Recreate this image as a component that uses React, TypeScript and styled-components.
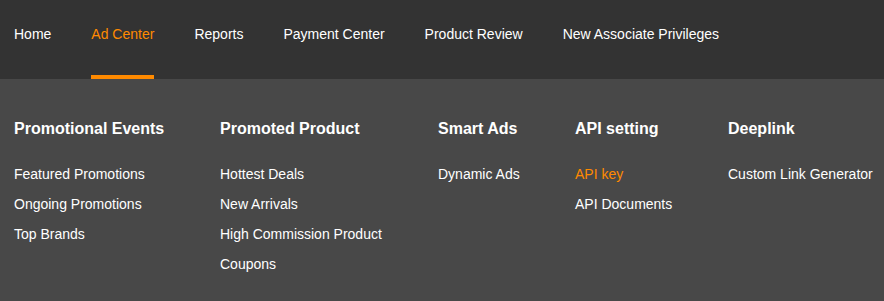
import React from "react";
import styled, { createGlobalStyle } from "styled-components";

const GlobalStyle = createGlobalStyle`
  body {
    margin: 0;
    background: #484848;
    font-family: Arial, "Liberation Sans", sans-serif;
  }
`;

const Page = styled.div`
  width: 884px;
  height: 301px;
  background: #484848;
`;

const TopBar = styled.nav`
  height: 79px;
  background: #333333;
  display: flex;
  align-items: stretch;
  gap: 40px;
  padding-left: 14px;
`;

const NavItem = styled.a<{ $active?: boolean }>`
  display: flex;
  align-items: flex-start;
  padding-top: 26px;
  box-sizing: border-box;
  font-size: 14px;
  line-height: 16px;
  color: ${(p) => (p.$active ? "#ff8a00" : "#ffffff")};
  border-bottom: 4px solid ${(p) => (p.$active ? "#ff8a00" : "transparent")};
  text-decoration: none;
  cursor: pointer;
`;

const Menu = styled.div`
  display: flex;
  padding: 41px 0 0 14px;
`;

const Column = styled.div<{ $width?: number }>`
  display: flex;
  flex-direction: column;
  flex: 0 0 ${(p) => (p.$width ? `${p.$width}px` : "auto")};
`;

const Heading = styled.h3`
  margin: 0 0 21px;
  font-size: 16px;
  line-height: 18px;
  font-weight: 700;
  color: #ffffff;
  white-space: nowrap;
`;

const MenuLink = styled.a<{ $active?: boolean }>`
  font-size: 14px;
  line-height: 30px;
  color: ${(p) => (p.$active ? "#ff8a00" : "#ffffff")};
  text-decoration: none;
  white-space: nowrap;
  cursor: pointer;
`;

const navItems = [
  "Home",
  "Ad Center",
  "Reports",
  "Payment Center",
  "Product Review",
  "New Associate Privileges",
];

const columns = [
  {
    title: "Promotional Events",
    width: 206,
    links: ["Featured Promotions", "Ongoing Promotions", "Top Brands"],
  },
  {
    title: "Promoted Product",
    width: 218,
    links: ["Hottest Deals", "New Arrivals", "High Commission Product", "Coupons"],
  },
  { title: "Smart Ads", width: 137, links: ["Dynamic Ads"] },
  { title: "API setting", width: 153, links: ["API key", "API Documents"] },
  { title: "Deeplink", links: ["Custom Link Generator"] },
];

export default function App() {
  return (
    <Page>
      <GlobalStyle />
      <TopBar>
        {navItems.map((item) => (
          <NavItem key={item} $active={item === "Ad Center"}>
            {item}
          </NavItem>
        ))}
      </TopBar>
      <Menu>
        {columns.map((col) => (
          <Column key={col.title} $width={col.width}>
            <Heading>{col.title}</Heading>
            {col.links.map((link) => (
              <MenuLink key={link} $active={link === "API key"}>
                {link}
              </MenuLink>
            ))}
          </Column>
        ))}
      </Menu>
    </Page>
  );
}
